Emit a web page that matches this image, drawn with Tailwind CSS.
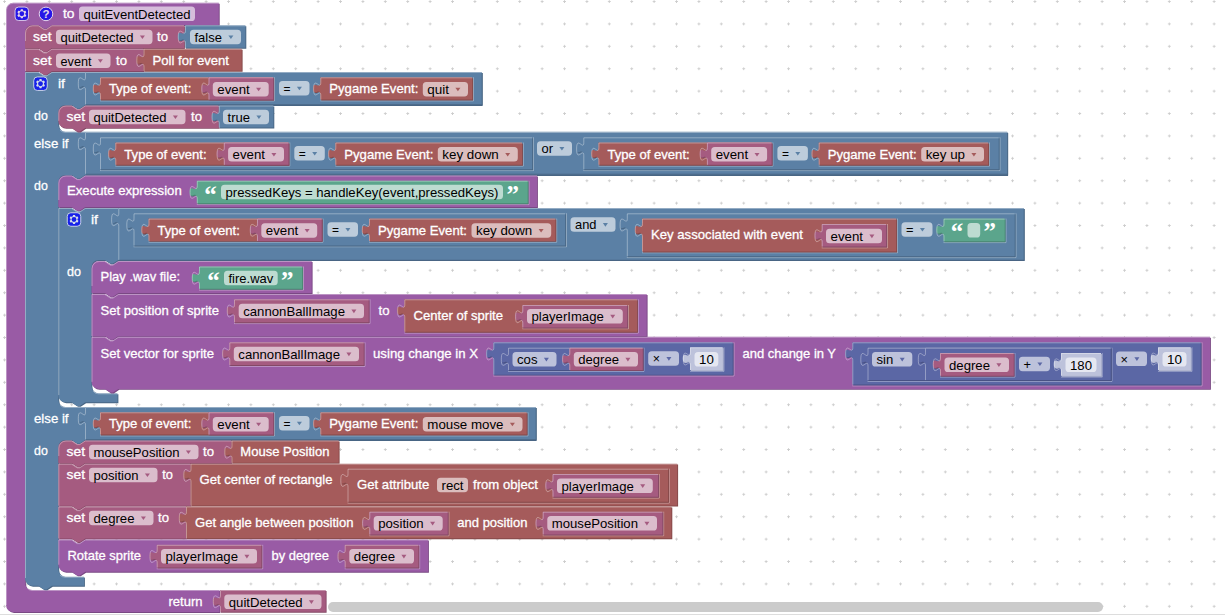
<!DOCTYPE html>
<html lang="en">
<head>
<meta charset="utf-8">
<title>Block workspace</title>
<script src="https://cdn.jsdelivr.net/npm/@tailwindcss/browser@4"></script>
</head>
<body class="bg-white overflow-hidden">
<main class="relative w-[1225px] h-[615px] overflow-hidden bg-white font-['Liberation_Sans',Arial,sans-serif]">
<svg id="ws" class="block w-[1225px] h-[615px]" viewBox="0 0 1225 615" xmlns="http://www.w3.org/2000/svg">
  <defs>
    <pattern id="grid" patternUnits="userSpaceOnUse" x="-6.7" y="-9.7" width="22.4" height="22.4">
      <path d="M9.9 11.2h2.7M11.2 9.9v2.7" class="stroke-[#cccccc] stroke-1"/>
    </pattern>
  </defs>
  <rect width="1225" height="615" fill="url(#grid)"/>
</svg>
</main>
<script>
const NS='http://www.w3.org/2000/svg', ws=document.getElementById('ws');
const FILL={proc:'fill-[#995ba5]',vari:'fill-[#a55b80]',red:'fill-[#a55b5b]',logic:'fill-[#5b80a5]',math:'fill-[#5b67a5]',text:'fill-[#5ba58c]',num:'fill-[#bdc2db]'};
const DARK={proc:'fill-[#7a4984]',vari:'fill-[#844966]',red:'fill-[#844949]',logic:'fill-[#496684]',math:'fill-[#495284]',text:'fill-[#498470]',num:'fill-[#b0b5cf]'};
function el(n,a,t,p){const e=document.createElementNS(NS,n);for(const k in a)e.setAttribute(k,a[k]);if(t!==undefined)e.textContent=t;(p||ws).appendChild(e);return e;}
const LIGHT='fill-none stroke-white/35 stroke-1';
const TAB='v4.5c0,9 -7.2,-7.2 -7.2,6.7s7.2,-2.2 7.2,6.7';
const NL='l5.4,3.6h2.7l5.4,-3.6', NR='l-5.4,3.6h-2.7l-5.4,-3.6';
function body(d,c){el('path',{d,class:DARK[c],transform:'translate(.9 .9)'});el('path',{d,class:FILL[c]});}
// value block; "ring" marks one that sits inside its parent
function V(x,y,r,b,c,ring=true){
  r-=1.3;b-=1.2;
  if(ring)el('path',{d:`M${r+1.3},${y}V${b+1.3}H${x}`,class:LIGHT});
  body(`M${x},${y}H${r}V${b}H${x}V${y+17.9}${'c0,-9 -7.2,2.2 -7.2,-6.7s7.2,2.3 7.2,-6.7'}z`,c);
  el('path',{d:`M${r},${y+.5}H${x+.5}${TAB}V${b}`,class:LIGHT});
}
// statement block
function S(x,y,r,b,c,first,last){
  r-=1;
  const tl=first?`M${x},${y+7.2}a7.2,7.2 0 0 1 7.2,-7.2`:`M${x},${y}`;
  const bl=last?`H${x+7.2}a7.2,7.2 0 0 1 -7.2,-7.2`:`H${x}`;
  body(`${tl}H${x+13.4}${NL}H${r}V${b-.9}H${x+26.9}${NR}${bl}z`,c);
  const t=first?`M${x+.5},${b-8}V${y+7.7}a7.2,7.2 0 0 1 7.2,-7.2`:`M${x+.5},${b-(last?8:1)}V${y+.5}`;
  el('path',{d:`${t}H${x+13.4}${NL}H${r}`,class:LIGHT});
}
function T(s,x,x2,y,dark){
  el('text',{x,y:y+.4,textLength:x2-x,lengthAdjust:'spacingAndGlyphs',class:dark?'fill-black text-[13.5px]':'fill-white stroke-white stroke-[0.3px] text-[13.5px]'},s);
}
const ARROW={vari:'fill-[#a55b80]',red:'fill-[#a55b5b]',logic:'fill-[#5b80a5]',math:'fill-[#5b67a5]'};
// editable field, with a drop-down arrow when a colour is given
function F(s,x,r,y,c){
  el('rect',{x,y,width:r-x,height:14.5,rx:3.6,class:'fill-white/60'});
  if(s)T(s,x+4.5,c?r-19:r-4.5,y+11.7,true);
  if(c)el('path',{d:`M${r-12.6},${y+5.8}h5l-2.5,3.6z`,class:ARROW[c]});
}
function Q(x,r,y){ // quotation marks
  el('text',{x:x+.8,y:y+18,class:"fill-white font-bold text-[25px] font-['Liberation_Serif',serif]"},'\u201c');
  el('text',{x:r+.5,y:y+18,class:"fill-white font-bold text-[25px] font-['Liberation_Serif',serif]"},'\u201d');
}
function gear(cx,cy){
  const g=el('g',{transform:`translate(${cx-7.2} ${cy-7.2}) scale(.9)`,class:'opacity-75'});
  el('rect',{x:.5,y:.5,width:15,height:15,rx:4,class:'fill-[#0000ff] stroke-white stroke-1'},undefined,g);
  el('path',{class:'fill-white',d:'m4.203,7.296 0,1.368 -0.92,0.677 -0.11,0.41 0.9,1.559 0.41,0.11 1.043,-0.457 1.187,0.683 0.127,1.134 0.3,0.3 1.8,0 0.3,-0.299 0.127,-1.138 1.185,-0.682 1.046,0.458 0.409,-0.11 0.9,-1.559 -0.11,-0.41 -0.92,-0.677 0,-1.366 0.92,-0.677 0.11,-0.41 -0.9,-1.559 -0.409,-0.109 -1.046,0.458 -1.185,-0.682 -0.127,-1.138 -0.3,-0.299 -1.8,0 -0.3,0.3 -0.126,1.135 -1.187,0.682 -1.043,-0.457 -0.41,0.11 -0.899,1.559 0.108,0.409z'},undefined,g);
  el('circle',{cx:8,cy:8,r:2.7,class:'fill-[#0000ff]'},undefined,g);
}
const mouth=(x,y,b)=>`V${y}H${x+26.9}${NR}H${x+7.2}a7.2,7.2 0 0 0 -7.2,7.2V${b-7.2}a7.2,7.2 0 0 0 7.2,7.2`;

// procedure definition
body(`M6,10a7.2,7.2 0 0 1 7.2,-7.2H218.8${mouth(25,25,590)}H219.5V612H13.2a7.2,7.2 0 0 1 -7.2,-7.2z`,'proc');
el('path',{d:'M6.5,605V10a6.7,6.7 0 0 1 6.7,-6.7H218.8M27,588a7.2,7.2 0 0 0 5,2.5H219.5',class:LIGHT});
gear(21.8,13.8);
const hg=el('g',{class:'opacity-75'});
el('circle',{cx:46,cy:13.9,r:6.8,class:'fill-[#0000ff] stroke-white stroke-1'},undefined,hg);
el('text',{x:46,y:18,'text-anchor':'middle',class:'fill-white font-bold text-[11.5px]'},'?',hg);
T('to',63,74.5,18);F('quitEventDetected',79,195,6.5);

S(25,25.3,185,49,'vari',true);V(185,25.3,246.7,49,'logic',false);
T('set',33,51.5,41);F('quitDetected',56,152.5,29.7,'vari');T('to',157,168,41);F('false',190,241,29.7,'logic');
S(25,48.8,144.5,72,'vari');V(143.5,48.8,243,72,'red',false);
T('set',33,51.5,65);F('event',56,110.5,53.4,'vari');T('to',116,127,65);T('Poll for event',152.5,229,65);

// outer if
body(`M25,72H38.4${NL}H481.7${mouth(58.3,105,131.8)}H1007.2${mouth(58.3,175,407)}H535.7${mouth(58.3,440,576.7)}H84V585.8H51.9${NR}H32.2a7.2,7.2 0 0 1 -7.2,-7.2z`,'logic');
el('path',{d:`M25.5,578V72.5H38.4${NL}H482M60,130a7.2,7.2 0 0 0 5,2.3H1007.5M60,405a7.2,7.2 0 0 0 5,2.5H536M60,575a7.2,7.2 0 0 0 5,2.2H84.5`,class:LIGHT});
gear(40.5,83.7);T('if',58,65,88);
V(85,72,483,105.5,'logic',false);
function typeOf(x,y){V(x,y,x+174.5,y+23.5,'red');V(x+108.5,y,x+174.5,y+23.5,'vari',false);T('Type of event:',x+9,x+91.3,y+15.7);F('event',x+112.8,x+168.7,y+4.6,'vari');F('=',x+179,x+209.5,y+3.6,'logic');}
function pg(x,y,r,s){V(x,y,r,y+23.5,'red');T('Pygame Event:',x+9,x+98,y+15.7);F(s,x+102.5,r-5.5,y+4.6,'red');}
typeOf(100,77.3);pg(320.3,77.3,473.5,'quit');
T('do',34,47.8,120);
S(58.3,105.5,219.7,128.8,'vari',true,true);V(218.8,105.5,274.7,128.8,'logic',false);
T('set',66.5,85,121);F('quitDetected',89,185.5,109.7,'vari');T('to',191,202,121);F('true',223,269,109.7,'logic');

T('else if',34,68.5,148);V(85,132,1008.5,175,'logic',false);
V(100,137.3,533.5,170.5,'logic');typeOf(115.3,142.5);pg(335.3,142.5,523.3,'key down');
F('or',537,572,141.2,'logic');
V(583.3,137.3,1000,170.5,'logic');typeOf(598.4,142.5);pg(818.7,142.5,989.5,'key up');
T('do',34,47.8,190);
S(58.3,175.5,538,208,'proc',true);T('Execute expression',67,181.7,195);
V(196.8,180.7,529,204.5,'text');Q(203.5,506,184.5);F('pressedKeys = handleKey(event,pressedKeys)',221,503,184.8);

// inner if
body(`M58.3,208H71.7${NL}H1023.7${mouth(91.5,260,393.3)}H117.5V402.3H85.2${NR}H65.5a7.2,7.2 0 0 1 -7.2,-7.2z`,'logic');
el('path',{d:`M58.8,395V208.5H71.7${NL}H1024M93,391a7.2,7.2 0 0 0 5,2.8H118`,class:LIGHT});
gear(74,219.5);T('if',91,98,224);
V(118.3,208,1025,261,'logic',false);
V(133.5,213.3,566.5,246.7,'logic');typeOf(148.5,218.6);pg(369,218.6,556.7,'key down');
F('and',570.5,615.5,217.3,'logic');
V(626.8,213.3,1016,257.5,'logic');
V(642,218.6,897.5,252.7,'red');T('Key associated with event',651,803,239);
V(821.7,224,887.5,247.8,'vari');F('event',826,882,228.8,'vari');F('=',901.5,932.5,222.2,'logic');
V(943.5,218.6,1006,242.5,'text');Q(950,983,222.3);F('',967.5,980.2,223);
T('do',67,81,276);

S(91.5,261,312.7,294,'proc',true);T('Play .wav file:',100.5,180,281);
V(199,266.5,303.5,290,'text');Q(206.5,280.5,270.5);F('fire.wav',224,277.7,270.8);
S(91.5,294,647.7,337,'proc');T('Set position of sprite',100.5,219,315);
V(234,299.3,370,323.5,'vari');F('cannonBallImage',238.7,364,303.8,'vari');T('to',378.5,389.5,315);
V(404.3,299.3,638.3,333,'red');T('Center of sprite',413.5,503,320);
V(522.3,305,628.5,328.7,'vari');F('playerImage',527,622.8,309,'vari');
S(91.5,336.8,1211,389.8,'proc',false,true);T('Set vector for sprite',100.5,214,358);
V(229.3,342.3,365,366.3,'vari');F('cannonBallImage',233.8,359,346.8,'vari');T('using change in X',373,478,358);
V(493.3,342.3,734,375.9,'math');V(508,347.7,644,371.3,'math');V(569.3,347.7,644,371.3,'vari',false);
F('cos',512.5,556.5,352,'math');F('degree',573.8,638,352,'vari');F('×',648.2,679,351.3,'math');
V(690,347.3,724,371.3,'num');F('10',694.5,718.3,352);
T('and change in Y',742.5,836,358);
V(852.3,342.3,1202,385.8,'math');V(867.5,347.7,1112,381.3,'math');V(925,347.7,1112,381.3,'math',false);
F('sin',872,912.3,352,'math');V(940,353,1015,377,'vari');F('degree',944.5,1009,357.5,'vari');
F('+',1019,1050,356.7,'math');V(1061,353,1102.3,377,'num');F('180',1065.5,1096.5,357.5);
F('×',1116,1147,351.5,'math');V(1158,347.3,1192,371.3,'num');F('10',1162.5,1186.5,352);

// second else if
T('else if',34,68.5,423);V(85,407,537,440.5,'logic',false);
typeOf(100,412.3);pg(320.3,412.3,528,'mouse move');
T('do',34,47.8,455);
S(58.3,440.5,232.5,464,'vari',true);V(231.5,440.5,340,464,'red',false);
T('set',66.5,85,456);F('mousePosition',89,198.5,444.7,'vari');T('to',203,214,456);T('Mouse Position',240.3,329.5,456);
S(58.3,463.7,191.5,506.7,'vari');V(190.5,463.7,678.5,506.7,'red',false);
T('set',66.5,85,479);F('position',89,157.5,467.7,'vari');T('to',162.3,173,479);T('Get center of rectangle',199.5,332.5,484);
V(347.5,468.7,669.3,503,'red');T('Get attribute',357,429.3,489);F('rect',437,468,477.7);T('from object',473,538,489);
V(552.5,474,659.3,498,'vari');F('playerImage',557,652.8,478.5,'vari');
S(58.3,506.5,187,539.5,'vari');V(186,506.5,672.7,539.5,'red',false);
T('set',66.5,85,522);F('degree',89,153.5,510.7,'vari');T('to',158,169,522);T('Get angle between position',195,353.5,527);
V(369.3,511.7,449,535.7,'vari');F('position',373.7,442.7,516,'vari');T('and position',457.3,527.5,527);
V(542.7,511.7,663.7,535.7,'vari');F('mousePosition',547.3,657,516,'vari');
S(58.3,539.5,429,572.7,'proc',false,true);T('Rotate sprite',67.5,141,560);
V(156.7,544.8,262.7,568.7,'vari');F('playerImage',161,257,549,'vari');T('by degree',271.5,329,560);
V(344.7,544.8,419.7,568.7,'vari');F('degree',349.3,414,549,'vari');
T('return',168.5,202.5,606);V(220,590,327,613,'vari',false);F('quitDetected',224.3,321.5,594.5,'vari');

// scrollbar and lower edge
el('rect',{x:328,y:602,width:775,height:10,rx:5,class:'fill-[#cbcbcb]'});
el('rect',{x:0,y:614,width:1225,height:1,class:'fill-[#dddddd]'});
</script>
</body>
</html>
